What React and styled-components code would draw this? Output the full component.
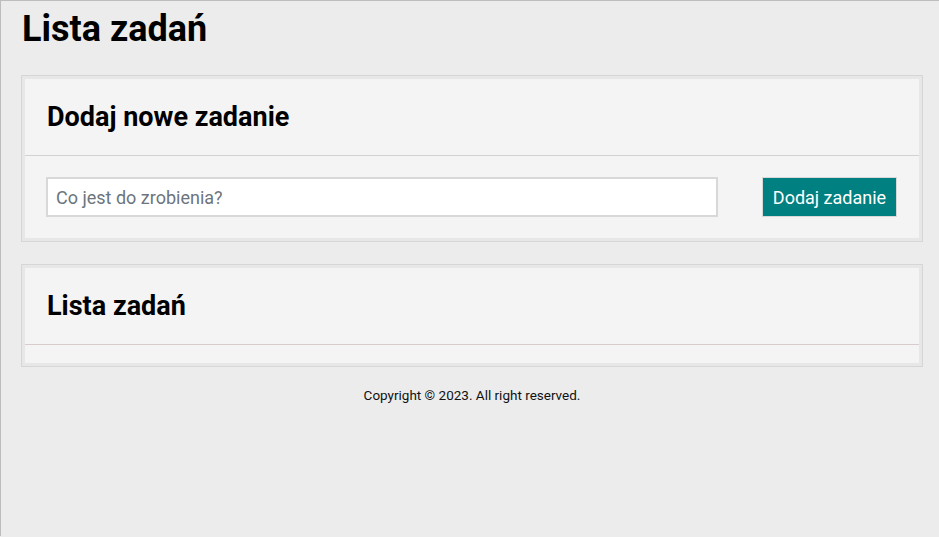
import React from 'react';
import styled, { createGlobalStyle } from 'styled-components';

const GlobalStyle = createGlobalStyle`
  html, body {
    margin: 0;
    padding: 0;
    background: #ececec;
  }
  body {
    font-family: Roboto, 'Liberation Sans', Arial, sans-serif;
    color: #000;
  }
`;

const Page = styled.div`
  min-height: 536px;
  border-top: 1px solid #bdbdbd;
  border-left: 1px solid #bdbdbd;
  padding: 0 16px 0 20px;
  box-sizing: border-box;
`;

const Title = styled.h1`
  font-size: 36px;
  font-weight: 700;
  margin: 7px 0 25px 1px;
`;

const Card = styled.section`
  border: 1px solid #d6d6d6;
  padding: 3px;
  background: #e7e7e7;
  margin-bottom: 22px;
`;

const CardInner = styled.div`
  background: #f4f4f4;
`;

const CardHeader = styled.div`
  padding: 22px 22px 22px;
  border-bottom: 1px solid ${p => p.$line || '#d2d2d2'};
`;

const CardTitle = styled.h2`
  margin: 0;
  font-size: 27px;
  font-weight: 700;
`;

const CardBody = styled.div`
  padding: ${p => p.$empty ? '18px 22px 0' : '21px 22px 21px 21px'};
`;

const Form = styled.form`
  display: flex;
  align-items: stretch;
  gap: 44px;
`;

const Input = styled.input`
  flex: 1;
  height: 40px;
  box-sizing: border-box;
  border: 2px solid #d8d8d8;
  background: #fff;
  padding: 0 8px;
  font-family: inherit;
  font-size: 18px;
  outline: none;
  &::placeholder {
    color: #6c757d;
  }
`;

const Button = styled.button`
  width: 135px;
  height: 40px;
  box-sizing: border-box;
  background: #008080;
  color: #fff;
  border: 1px solid #d8d8d8;
  font-family: inherit;
  font-size: 18px;
  cursor: pointer;
`;

const Footer = styled.footer`
  text-align: center;
  font-size: 13.5px;
  color: #111;
  margin-top: -2px;
`;

export default function App() {
  return (
    <>
      <GlobalStyle />
      <Page>
        <Title>Lista zadań</Title>
        <Card>
          <CardInner>
            <CardHeader>
              <CardTitle>Dodaj nowe zadanie</CardTitle>
            </CardHeader>
            <CardBody>
              <Form onSubmit={e => e.preventDefault()}>
                <Input placeholder="Co jest do zrobienia?" />
                <Button type="submit">Dodaj zadanie</Button>
              </Form>
            </CardBody>
          </CardInner>
        </Card>
        <Card>
          <CardInner>
            <CardHeader $line="#d8cccc">
              <CardTitle>Lista zadań</CardTitle>
            </CardHeader>
            <CardBody $empty />
          </CardInner>
        </Card>
        <Footer>Copyright © 2023. All right reserved.</Footer>
      </Page>
    </>
  );
}
